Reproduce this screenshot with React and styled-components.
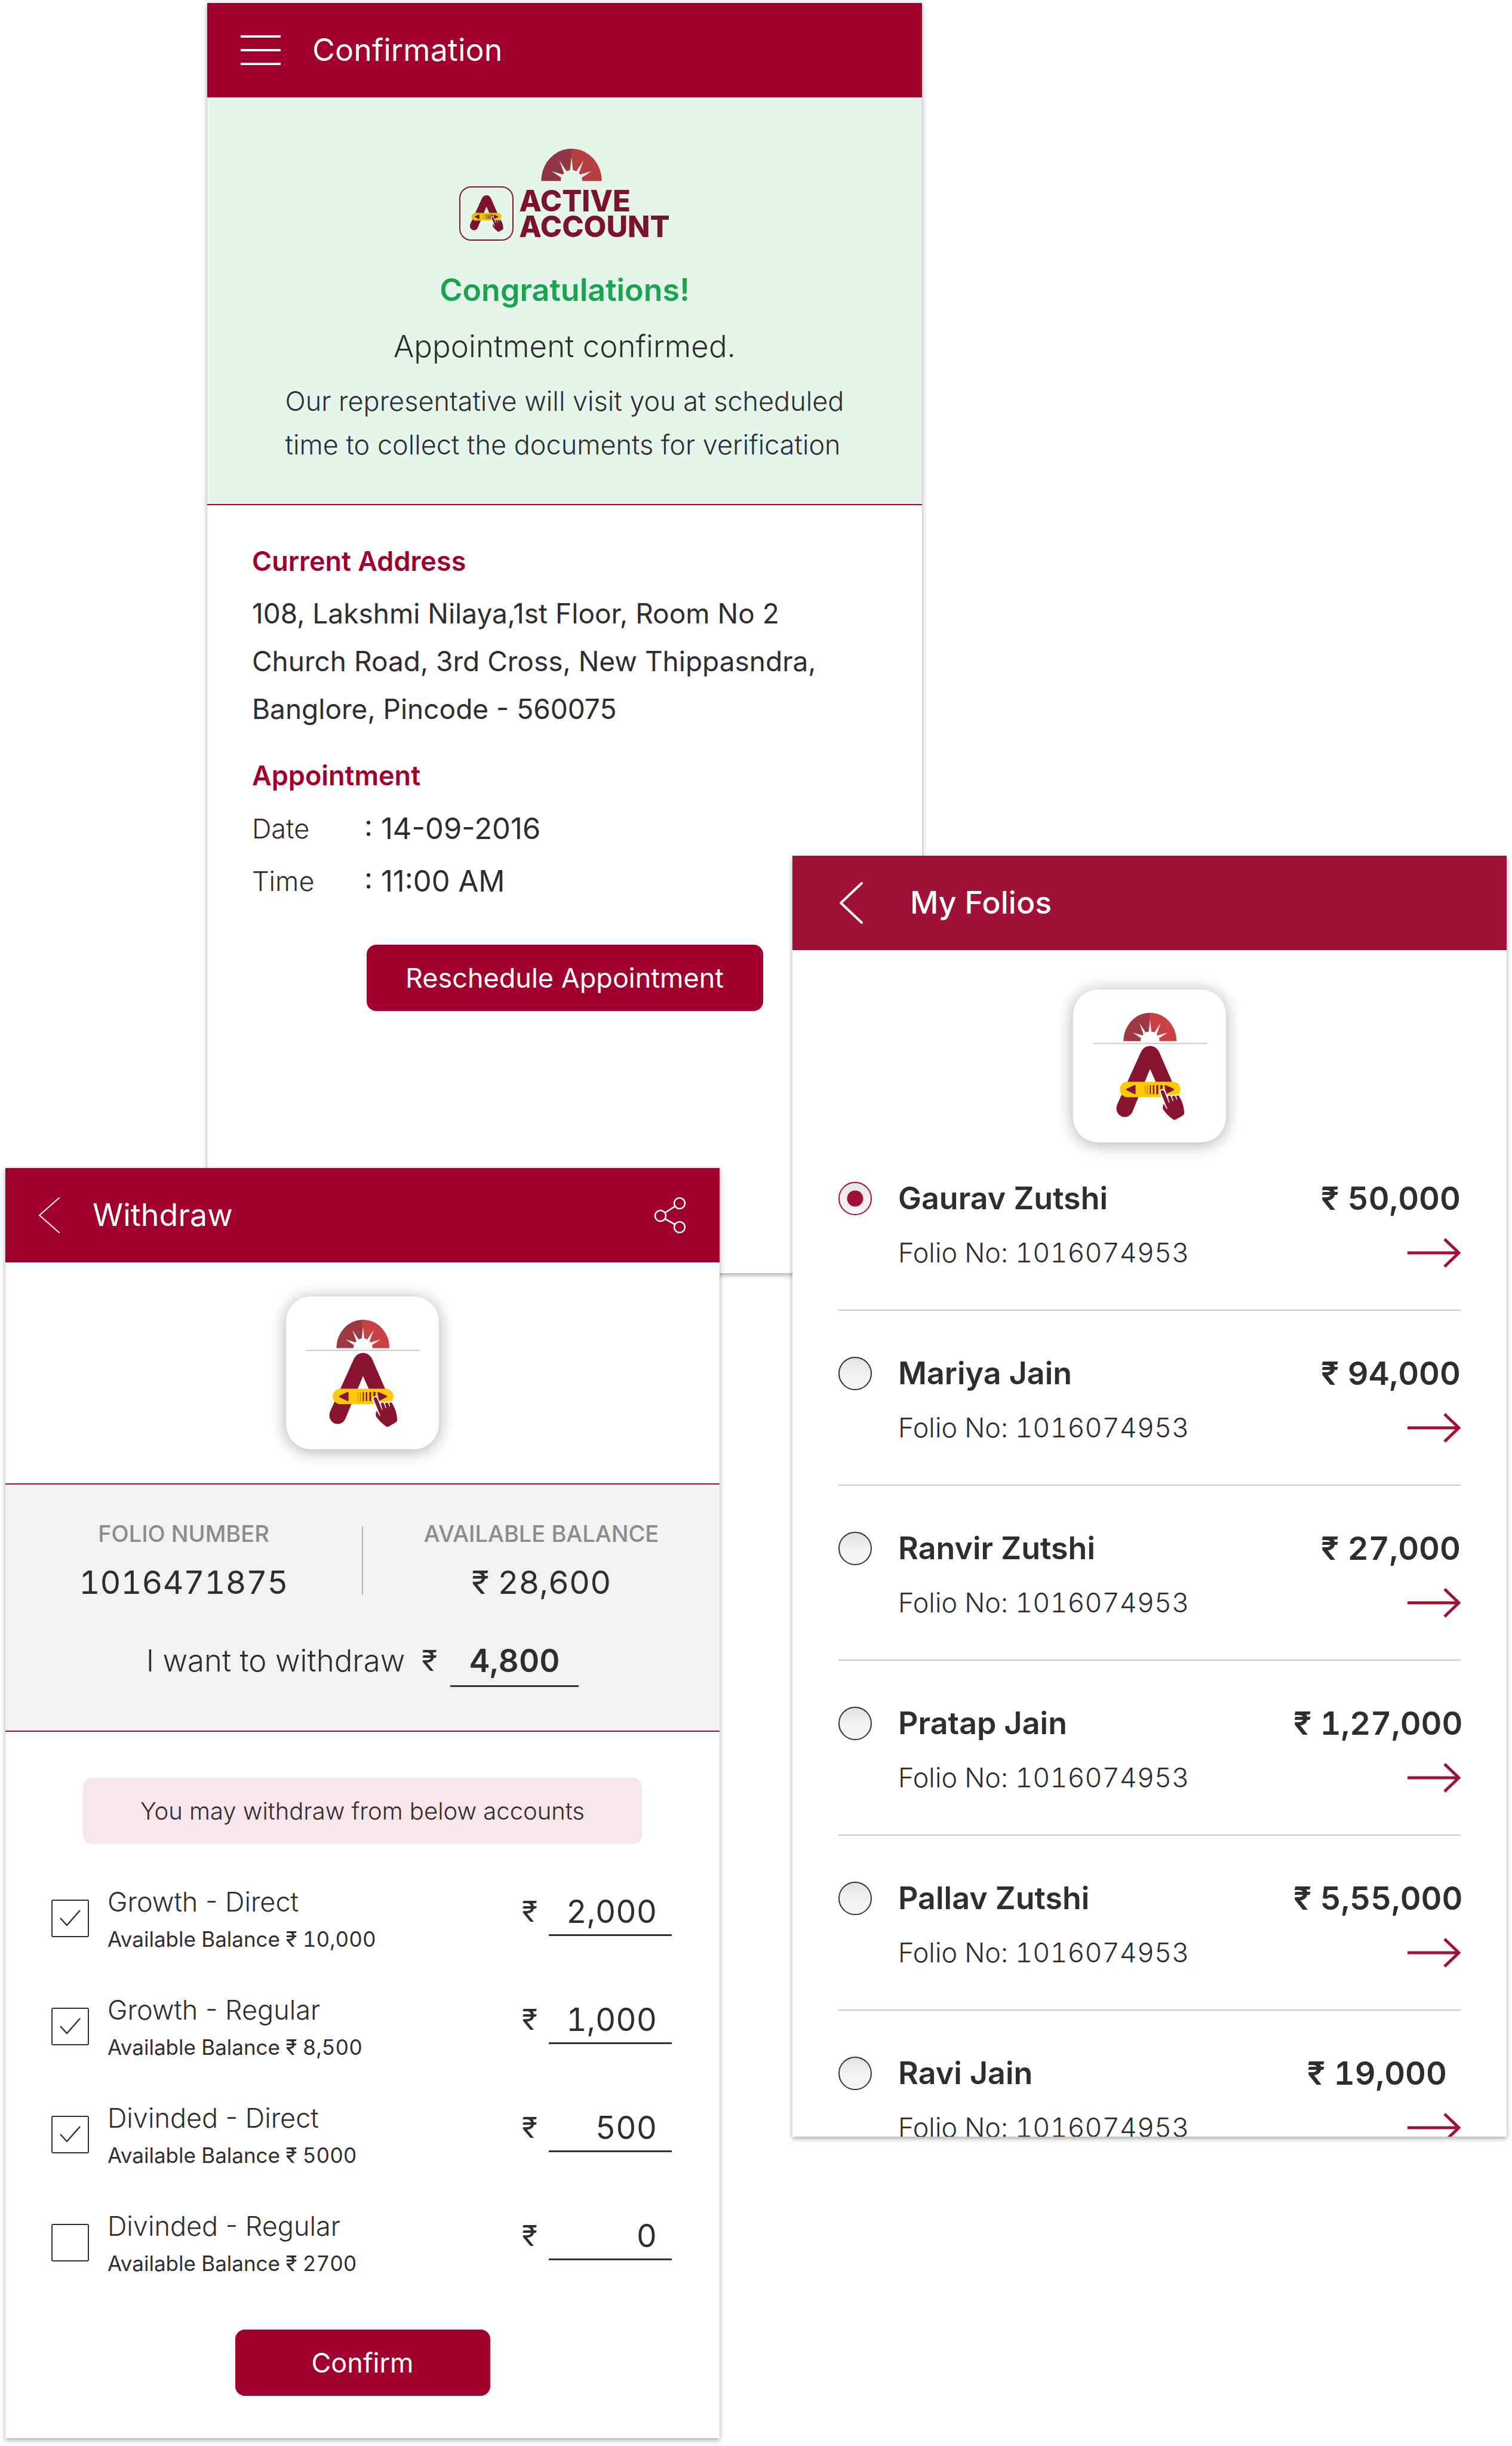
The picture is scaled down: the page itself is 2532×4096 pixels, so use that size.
import React from 'react';
import styled, { createGlobalStyle, css } from 'styled-components';

const color = {
  brand: '#a1002e',
  brandSoft: '#a01037',
  ink: '#2f2d2e',
  green: '#1aa450',
  mint: '#e5f5ec',
  grey: '#f2f2f2',
  pink: '#f6e5ea',
};

const GlobalStyle = createGlobalStyle`
  * { box-sizing: border-box; }
  body { margin: 0; background: #fff; }
  body, button, input {
    font-family: Inter, "Liberation Sans", sans-serif;
    color: ${color.ink};
  }
  h1, h2, p, dl, dd, ul { margin: 0; padding: 0; }
`;

/* ---------- shared parts ---------- */

const Board = styled.main`
  display: grid;
  grid-template-columns: 9fr 338fr 858fr 122fr 217fr 979fr 9fr;
  align-items: start;
  padding-bottom: 14px;
`;

const Screen = styled.section`
  grid-row: 1;
  background: #fff;
  box-shadow: 0 3px 8px rgba(0, 0, 0, 0.36);
`;

const ConfirmationCard = styled(Screen)`
  grid-column: 3 / 6;
  margin-top: 5px;
  min-height: 2127px;
`;

const FoliosCard = styled(Screen)`
  grid-column: 5 / 7;
  margin-top: 1433px;
  max-height: 2145px;
  overflow: hidden;
`;

const WithdrawCard = styled(Screen)`
  grid-column: 2 / 4;
  margin-top: 1956px;
  padding-bottom: 71px;
`;

const AppBar = styled.header`
  display: flex;
  align-items: center;
  gap: ${(p) => p.$gap}px;
  height: 158px;
  padding: 0 56px 0 ${(p) => p.$indent}px;
  background: ${(p) => (p.$soft ? color.brandSoft : color.brand)};
`;

const Title = styled.h1`
  flex: 1;
  font-size: 52px;
  line-height: 64px;
  font-weight: ${(p) => (p.$strong ? 500 : 400)};
  color: #fff;
`;

const IconButton = styled.button`
  display: flex;
  padding: 0;
  border: 0;
  background: none;
  cursor: pointer;
`;

const PrimaryButton = styled.button`
  display: block;
  width: ${(p) => p.$width}px;
  max-width: 100%;
  height: 111px;
  margin: ${(p) => p.$top}px auto 0;
  border: 0;
  border-radius: 16px;
  background: ${color.brand};
  color: #fff;
  font-size: 45px;
  font-weight: 400;
  cursor: pointer;
`;

const Tile = styled.div`
  width: 256px;
  height: 256px;
  margin: ${(p) => p.$top}px auto 0;
  border-radius: 42px;
  background: #fff;
  box-shadow: 0 3px 28px rgba(0, 0, 0, 0.33);
`;

/* ---------- drawings ---------- */

const MenuIcon = () => (
  <svg width="67" height="52" viewBox="0 0 67 52" stroke="#fff" strokeWidth="4">
    <path d="M0 3H67M0 26H67M0 49H67" />
  </svg>
);

const BackIcon = ({ width, height, stroke }) => (
  <svg width={width} height={height} viewBox={`0 0 ${width} ${height}`} fill="none" stroke="#fff" strokeWidth={stroke} strokeLinecap="round">
    <path d={`M${width - 2} 2L2 ${height / 2}L${width - 2} ${height - 2}`} />
  </svg>
);

const ShareIcon = () => (
  <svg width="54" height="62" viewBox="0 0 54 62" fill="none" stroke="#fff" strokeWidth="2.6">
    <circle cx="43" cy="11" r="9" />
    <circle cx="11" cy="32" r="9" />
    <circle cx="43" cy="51" r="9" />
    <path d="M18.5 27L35.500 16M18.500 37L35.500 46.500" />
  </svg>
);

const ArrowIcon = () => (
  <svg width="89" height="50" viewBox="0 0 89 50" fill="none" stroke={color.brandSoft} strokeWidth="5">
    <path d="M0 25H85M62 2L86 25L62 48" />
  </svg>
);

const Sunrise = ({ ground, left, right }) => (
  <g>
    <path fill={left} d="M445 427A180 192 0 0 1 625 235V427Z" />
    <path fill={right} d="M625 235A180 192 0 0 1 805 427H625Z" />
    <g fill={ground}>
      <path d="M561 428C561 418 562 411 565 406L572 391C576 386 580 380 585 376L595 370C601 366 609 364 617 362H633C641 364 649 366 655 370L665 376C670 380 674 386 678 391L685 406C688 411 689 418 689 428Z" />
      <path d="M625 283L634 366H616Z" />
      <path d="M553 305L597 371L581 382Z" />
      <path d="M697 305L669 382L653 371Z" />
      <path d="M507 369L574 389L564 407Z" />
      <path d="M745 369L686 407L676 389Z" />
    </g>
  </g>
);

const SliderA = ({ ground, ink, band }) => (
  <g>
    <path
      fill={ink}
      d="M401 860L562 503C577 474 600 460 625 460C650 460 673 474 688 503L776 706H665L625 617L506 905C495 930 475 942 453 942C414 942 386 902 401 860Z"
    />
    <rect x="420" y="703" width="411" height="104" rx="50" fill={band} />
    <g fill={ink} stroke={ink} strokeWidth="10" strokeLinejoin="round">
      <path d="M467 755L522 730V782Z" />
      <path d="M729 730L784 755L735 780Z" />
    </g>
    <g stroke={ink}>
      <path d="M591 726V787" strokeWidth="3" opacity="0.6" />
      <path d="M607 726V787" strokeWidth="5" opacity="0.6" />
      <path d="M627 725V787" strokeWidth="8" />
      <path d="M649 725V787" strokeWidth="10" />
      <path d="M674 725V787" strokeWidth="13" />
      <path d="M702 725V787" strokeWidth="16" />
    </g>
    <path
      fill={ink}
      stroke={ground}
      strokeWidth="16"
      strokeLinejoin="round"
      paintOrder="stroke"
      d="M698 776C694 756 715 756 721 768L753 846L758 844L746 806C748 795 761 794 767 804L779 836L784 834L775 806C777 794 791 794 797 804L805 825L809 822L804 804C806 792 818 792 824 804C845 840 856 875 857 916C856 925 850 930 845 933L800 959C793 962 787 962 780 957C755 940 730 915 713 889C710 875 713 862 718 852L738 888L742 884Z"
    />
  </g>
);

const AppMark = () => (
  <svg width="256" height="256" viewBox="103 77 1037 1037" role="img" aria-label="Active Account">
    <Sunrise ground="#fff" left="#a03844" right="#c94045" />
    <path d="M238 443H1012" stroke="#c3c3c9" strokeWidth="7" />
    <SliderA ground="#fff" ink="#881432" band="#fec90b" />
  </svg>
);

/* ---------- confirmation ---------- */

const Banner = styled.div`
  display: flex;
  flex-direction: column;
  align-items: center;
  padding: 86px 60px 63px;
  background: ${color.mint};
  border-bottom: 2px solid ${color.brand};
`;

const Logo = styled.div`
  display: flex;
  align-items: flex-end;
  gap: 9px;
`;

const LogoBadge = styled.div`
  display: flex;
  align-items: center;
  justify-content: center;
  width: 91px;
  height: 91px;
  border: 2px solid #7d1a34;
  border-radius: 20px;
`;

const Wordmark = styled.div`
  padding-bottom: 2px;
  font-size: 49px;
  line-height: 43px;
  font-weight: 800;
  color: #7b132e;

  svg {
    display: block;
    margin: 0 0 12px 37px;
  }
  span {
    display: block;
  }
`;

const Congrats = styled.h2`
  margin-top: 51px;
  font-size: 52px;
  line-height: 64px;
  font-weight: 600;
  color: ${color.green};
`;

const Lead = styled.p`
  margin-top: 30px;
  font-size: 51px;
  line-height: 64px;
  font-weight: 300;
`;

const Note = styled.p`
  margin-top: 23px;
  font-size: 45px;
  line-height: 73px;
  font-weight: 300;
`;

const Details = styled.div`
  padding: 62px 75px;
`;

const SectionTitle = styled.h2`
  margin-top: ${(p) => (p.$spaced ? 40 : 0)}px;
  font-size: 45px;
  line-height: 64px;
  font-weight: 600;
  color: ${color.brand};
`;

const Address = styled.p`
  margin-top: 15px;
  font-size: 46px;
  line-height: 80px;
`;

const Schedule = styled.dl`
  display: grid;
  grid-template-columns: 188px 1fr;
  margin-top: 13px;
  line-height: 88px;

  dt {
    font-size: 45px;
    font-weight: 300;
  }
  dd {
    font-size: 49px;
  }
`;

function Confirmation() {
  return (
    <ConfirmationCard>
      <AppBar $indent={56} $gap={53}>
        <IconButton aria-label="Menu"><MenuIcon /></IconButton>
        <Title>Confirmation</Title>
      </AppBar>
      <Banner>
        <Logo>
          <LogoBadge>
            <svg width="56" height="61" viewBox="398 460 460 502">
              <SliderA ground={color.mint} ink="#7b132e" band="#e6c60a" />
            </svg>
          </LogoBadge>
          <Wordmark>
            <svg width="102" height="54" viewBox="445 235 360 192">
              <Sunrise ground={color.mint} left="#903541" right="#b73d41" />
            </svg>
            <span>ACTIVE</span>
            <span>ACCOUNT</span>
          </Wordmark>
        </Logo>
        <Congrats>Congratulations!</Congrats>
        <Lead>Appointment confirmed.</Lead>
        <Note>
          Our representative will visit you at scheduled
          <br />
          time to collect the documents for verification
        </Note>
      </Banner>
      <Details>
        <SectionTitle>Current Address</SectionTitle>
        <Address>
          108, Lakshmi Nilaya,1st Floor, Room No 2
          <br />
          Church Road, 3rd Cross, New Thippasndra,
          <br />
          Banglore, Pincode - 560075
        </Address>
        <SectionTitle $spaced>Appointment</SectionTitle>
        <Schedule>
          <dt>Date</dt>
          <dd>: 14-09-2016</dd>
          <dt>Time</dt>
          <dd>: 11:00 AM</dd>
        </Schedule>
        <PrimaryButton $width={664} $top={62}>Reschedule Appointment</PrimaryButton>
      </Details>
    </ConfirmationCard>
  );
}

/* ---------- folios ---------- */

const folios = [
  { name: 'Gaurav Zutshi', amount: '50,000' },
  { name: 'Mariya Jain', amount: '94,000' },
  { name: 'Ranvir Zutshi', amount: '27,000' },
  { name: 'Pratap Jain', amount: '1,27,000', centered: true },
  { name: 'Pallav Zutshi', amount: '5,55,000', centered: true },
  { name: 'Ravi Jain', amount: '19,000', centered: true },
];

const FolioList = styled.ul`
  list-style: none;
  margin: 0 77px;
`;

const FolioRow = styled.li`
  display: grid;
  grid-template-columns: 56px 1fr 280px;
  column-gap: 44px;
  row-gap: 31px;
  align-items: center;
  padding: 73px 0 67px;
  border-bottom: 2px solid #c9c9c9;

  &:first-child {
    padding-top: 62px;
  }
`;

const Radio = styled.input`
  appearance: none;
  width: 56px;
  height: 56px;
  margin: 0;
  border: 2px solid #333;
  border-radius: 50%;
  background: linear-gradient(#e2e2e2, #f4f4f4 60%);

  &:checked {
    border-color: ${color.brandSoft};
    background: radial-gradient(circle, ${color.brandSoft} 13px, transparent 14px), linear-gradient(#e6e6e6, #f6f6f6);
  }
`;

const HolderName = styled.label`
  font-size: 52px;
  line-height: 64px;
  font-weight: 600;
`;

const Amount = styled.span`
  font-size: 54px;
  line-height: 64px;
  font-weight: 600;
  font-variant-numeric: tabular-nums;
  white-space: nowrap;
  text-align: ${(p) => (p.$centered ? 'center' : 'right')};
`;

const FolioNumber = styled.span`
  grid-column: 2;
  font-size: 45px;
  line-height: 56px;
  font-weight: 300;
  font-variant-numeric: tabular-nums;
`;

const OpenButton = styled(IconButton)`
  justify-self: end;
`;

function Folios() {
  return (
    <FoliosCard>
      <AppBar $indent={79} $gap={79} $soft>
        <IconButton aria-label="Back"><BackIcon width={39} height={70} stroke={4} /></IconButton>
        <Title $strong>My Folios</Title>
      </AppBar>
      <Tile $top={66}><AppMark /></Tile>
      <FolioList>
        {folios.map((f, i) => (
          <FolioRow key={f.name}>
            <Radio type="radio" name="folio" id={`folio-${i}`} defaultChecked={i === 0} />
            <HolderName htmlFor={`folio-${i}`}>{f.name}</HolderName>
            <Amount $centered={f.centered}>₹ {f.amount}</Amount>
            <FolioNumber>Folio No: 1016074953</FolioNumber>
            <OpenButton aria-label={`Open ${f.name}`}><ArrowIcon /></OpenButton>
          </FolioRow>
        ))}
      </FolioList>
    </FoliosCard>
  );
}

/* ---------- withdraw ---------- */

const accounts = [
  { name: 'Growth - Direct', balance: '10,000', value: '2,000', checked: true },
  { name: 'Growth - Regular', balance: '8,500', value: '1,000', checked: true },
  { name: 'Divinded - Direct', balance: '5000', value: '500', checked: true },
  { name: 'Divinded - Regular', balance: '2700', value: '0', checked: false },
];

const Summary = styled.div`
  margin-top: 57px;
  padding: 58px 0 73px;
  background: ${color.grey};
  border-top: 2px solid ${color.brandSoft};
  border-bottom: 2px solid ${color.brandSoft};
`;

const Stats = styled.div`
  display: grid;
  grid-template-columns: 1fr 2px 1fr;
  align-items: center;
  text-align: center;
`;

const StatLabel = styled.p`
  font-size: 38px;
  line-height: 48px;
  font-weight: 500;
  color: #8b8b8b;
`;

const StatValue = styled.p`
  margin-top: 26px;
  font-size: 54px;
  line-height: 64px;
  font-variant-numeric: tabular-nums;
`;

const Separator = styled.div`
  height: 115px;
  background: #b5b5b5;
`;

const field = css`
  display: block;
  padding: 0;
  border: 0;
  border-bottom: 3px solid #333;
  border-radius: 0;
  background: none;
  font-size: 53px;
  line-height: 64px;
  font-variant-numeric: tabular-nums;
`;

const WithdrawRow = styled.div`
  display: flex;
  justify-content: center;
  margin-top: 67px;
  line-height: 64px;

  label {
    margin-right: 28px;
    font-size: 51px;
    font-weight: 300;
  }
`;

const Rupee = styled.span`
  width: ${(p) => p.$width}px;
  margin-right: 18px;
  font-size: 48px;
  line-height: 64px;
`;

const TotalInput = styled.input`
  ${field}
  width: 215px;
  height: 76px;
  padding-bottom: 9px;
  font-weight: 600;
  text-align: center;
`;

const Hint = styled.p`
  display: flex;
  align-items: center;
  justify-content: center;
  height: 111px;
  margin: 77px 130px 67px;
  border-radius: 16px;
  background: ${color.pink};
  font-size: 40px;
  font-weight: 300;
`;

const AccountList = styled.ul`
  display: flex;
  flex-direction: column;
  gap: 67px;
  list-style: none;
  margin: 0 80px 0 77px;
`;

const AccountRow = styled.li`
  display: flex;
  align-items: center;
  gap: 31px;
`;

const CheckCell = styled.span`
  position: relative;
  display: flex;

  svg {
    position: absolute;
    inset: 0;
    pointer-events: none;
  }
  input:not(:checked) + svg {
    display: none;
  }
`;

const Checkbox = styled.input`
  appearance: none;
  flex: none;
  width: 63px;
  height: 63px;
  margin: 0;
  border: 2px solid #333;
  border-radius: 3px;
`;

const AccountLabel = styled.label`
  flex: 1;
`;

const AccountName = styled.span`
  display: block;
  font-size: 45px;
  line-height: 60px;
  font-weight: 300;
`;

const AccountBalance = styled.span`
  display: block;
  margin-top: 10px;
  font-size: 35px;
  line-height: 44px;
  font-variant-numeric: tabular-nums;
`;

const AmountField = styled.div`
  display: flex;
  align-self: flex-start;
  padding-top: 14px;
`;

const AmountInput = styled.input`
  ${field}
  width: 206px;
  height: 73px;
  padding: 0 25px 6px 0;
  text-align: right;
`;

function Withdraw() {
  return (
    <WithdrawCard>
      <AppBar $indent={55} $gap={54}>
        <IconButton aria-label="Back"><BackIcon width={37} height={62} stroke={2} /></IconButton>
        <Title>Withdraw</Title>
        <IconButton aria-label="Share"><ShareIcon /></IconButton>
      </AppBar>
      <Tile $top={57}><AppMark /></Tile>
      <Summary>
        <Stats>
          <div>
            <StatLabel>FOLIO NUMBER</StatLabel>
            <StatValue>1016471875</StatValue>
          </div>
          <Separator />
          <div>
            <StatLabel>AVAILABLE BALANCE</StatLabel>
            <StatValue>₹ 28,600</StatValue>
          </div>
        </Stats>
        <WithdrawRow>
          <label htmlFor="total">I want to withdraw</label>
          <Rupee $width={30}>₹</Rupee>
          <TotalInput id="total" defaultValue="4,800" />
        </WithdrawRow>
      </Summary>
      <Hint>You may withdraw from below accounts</Hint>
      <AccountList>
        {accounts.map((a, i) => (
          <AccountRow key={a.name}>
            <CheckCell>
              <Checkbox type="checkbox" id={`account-${i}`} defaultChecked={a.checked} />
              <svg width="63" height="63" viewBox="0 0 63 63" fill="none" stroke="#333" strokeWidth="2.5">
                <path d="M15 31L26 43L48 18" />
              </svg>
            </CheckCell>
            <AccountLabel htmlFor={`account-${i}`}>
              <AccountName>{a.name}</AccountName>
              <AccountBalance>Available Balance ₹ {a.balance}</AccountBalance>
            </AccountLabel>
            <AmountField>
              <Rupee $width={27}>₹</Rupee>
              <AmountInput aria-label={`Amount from ${a.name}`} defaultValue={a.value} />
            </AmountField>
          </AccountRow>
        ))}
      </AccountList>
      <PrimaryButton $width={427} $top={89}>Confirm</PrimaryButton>
    </WithdrawCard>
  );
}

export default function App() {
  return (
    <>
      <GlobalStyle />
      <Board>
        <Confirmation />
        <Folios />
        <Withdraw />
      </Board>
    </>
  );
}
